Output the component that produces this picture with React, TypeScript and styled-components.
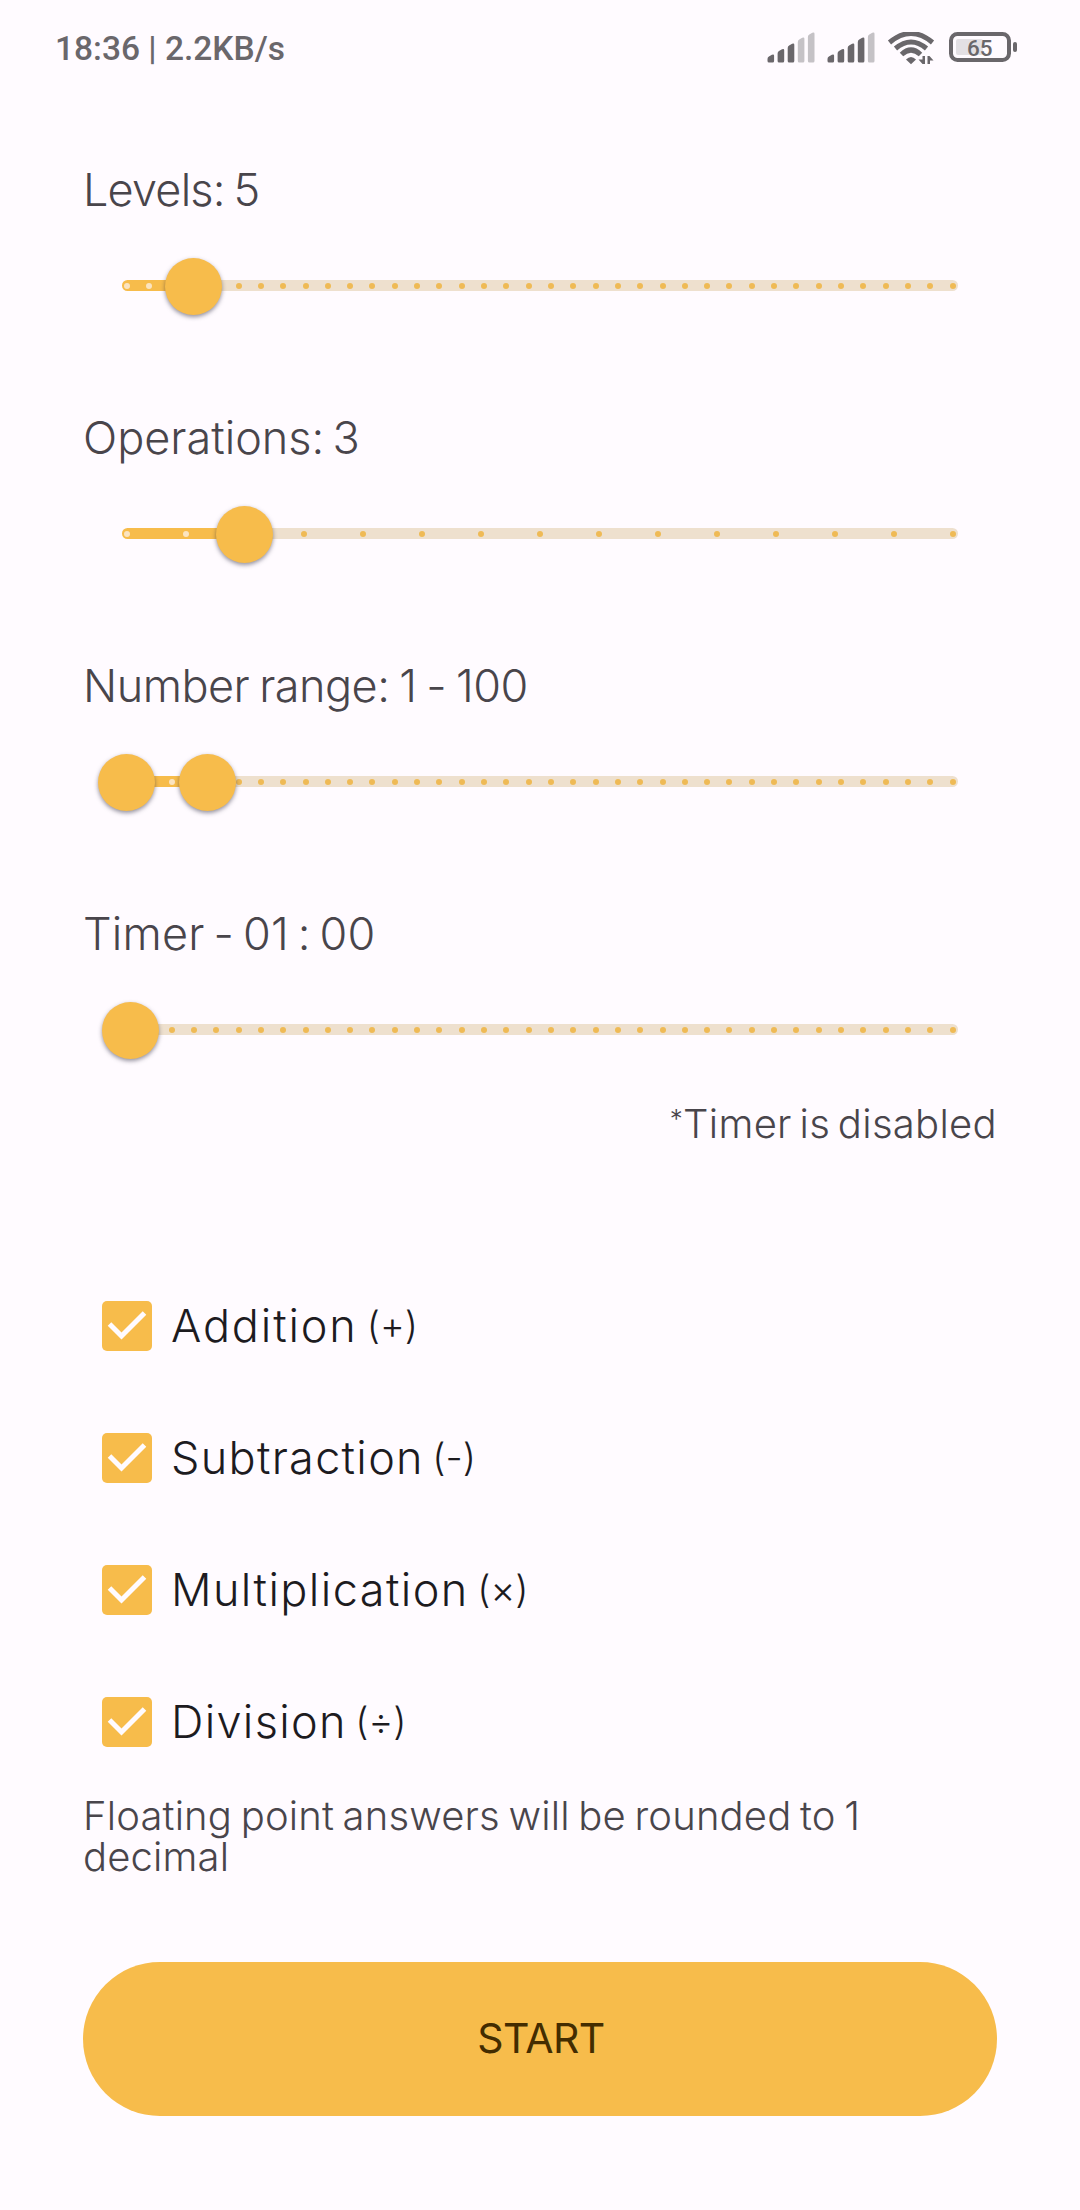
import React from 'react';
import styled, { createGlobalStyle } from 'styled-components';

const AMBER = '#f7bc4b';
const STATUS_GREY = '#6a676b';

const GlobalStyle = createGlobalStyle`
  *, *::before, *::after { box-sizing: border-box; }
  html, body { margin: 0; background: #fffbff; }
  body { font-family: Inter, "Liberation Sans", sans-serif; font-weight: 300; font-feature-settings: "calt" 0; }
`;

const Screen = styled.div`
  width: 1080px;
  height: 2210px;
  overflow: hidden;
  display: flex;
  flex-direction: column;
  background: #fffbff;
`;

const StatusBar = styled.header`
  height: 96px;
  padding: 0 62px 0 55px;
  display: flex;
  justify-content: space-between;
  align-items: center;
  color: ${STATUS_GREY};
`;

const Clock = styled.span`
  margin-top: 2px;
  font: 500 33.5px/40px Roboto, sans-serif;
  white-space: pre;
`;

const StatusIcons = styled.svg`
  display: block;
  width: 252px;
  height: 36px;
  margin-top: 4px;
`;

const BatteryText = styled.text`
  font: 500 22.5px Roboto, sans-serif;
  fill: ${STATUS_GREY};
`;

const Content = styled.main`
  padding: 66px 83px 0;
  display: flex;
  flex-direction: column;
`;

const Settings = styled.section`
  display: flex;
  flex-direction: column;
  gap: 94px;
`;

const Setting = styled.div`
  display: flex;
  flex-direction: column;
  gap: 38px;
`;

const Text = styled.span<{ $ls?: number; $ws?: number }>`
  font-size: 45px;
  line-height: 56px;
  color: #49454b;
  white-space: nowrap;
  letter-spacing: ${(p) => p.$ls ?? 0}px;
  word-spacing: ${(p) => p.$ws ?? 0}px;
`;

const Slider = styled.div`
  position: relative;
  height: 60px;
  margin: 0 39px;
  padding-bottom: 1px;
  display: flex;
  align-items: center;
`;

const Track = styled.div<{ $from: number; $to: number }>`
  width: 100%;
  height: 11px;
  padding: 0 2px;
  border-radius: 5.5px;
  display: flex;
  align-items: center;
  justify-content: space-between;
  background: linear-gradient(${AMBER}, ${AMBER}) ${(p) => p.$from}px 0 / ${(p) => p.$to - p.$from}px 100% no-repeat #eee0ce;
`;

const Tick = styled.i<{ $active: boolean }>`
  width: 6px;
  height: 6px;
  border-radius: 50%;
  background: ${(p) => (p.$active ? '#fbe4c0' : '#efba56')};
`;

const Thumb = styled.div<{ $at: number }>`
  position: absolute;
  left: ${(p) => p.$at - 28.5}px;
  top: 2px;
  width: 57px;
  height: 57px;
  border-radius: 50%;
  background: ${AMBER};
  box-shadow: 0 2px 4px rgba(40, 40, 60, 0.5);
`;

const Note = styled(Text)`
  font-size: 40px;
  line-height: 48px;
  margin-top: 40px;
  align-self: flex-end;
`;

const Asterisk = styled.span`
  font-size: 26px;
  line-height: 0;
  vertical-align: 10px;
`;

const Checks = styled.section`
  margin-top: 112px;
  display: flex;
  flex-direction: column;
`;

const CheckRow = styled.label`
  height: 132px;
  padding-left: 19px;
  display: flex;
  align-items: center;
  gap: 19px;
`;

const Box = styled.span`
  width: 50px;
  height: 50px;
  border-radius: 5px;
  background: ${AMBER};
`;

const CheckText = styled(Text)`
  color: #1d1b1f;
`;

const Sign = styled.span`
  font-size: 38px;
  line-height: 0;
  letter-spacing: 0;
  vertical-align: 3px;
`;

const Hint = styled(Text)`
  font-size: 40px;
  line-height: 41px;
  margin-top: 7px;
  white-space: pre-line;
`;

const StartButton = styled.button`
  margin-top: 85px;
  height: 154px;
  padding: 0 0 2px 2px;
  border: 0;
  border-radius: 77px;
  background: ${AMBER};
  color: #432c00;
  font: 400 41px/50px Inter, sans-serif;
  letter-spacing: -0.6px;
`;

type SliderData = { label: string; ls: number; ws: number; ticks: number; from: number; to: number; thumbs: number[] };

const sliders: SliderData[] = [
  { label: 'Levels: 5', ls: -0.8, ws: -3.1, ticks: 38, from: 0, to: 71.5, thumbs: [71.5] },
  { label: 'Operations: 3', ls: 0, ws: -4.4, ticks: 15, from: 0, to: 122.5, thumbs: [122.5] },
  { label: 'Number range: 1 - 100', ls: -0.5, ws: -2.3, ticks: 38, from: 4.5, to: 85.5, thumbs: [4.5, 85.5] },
  { label: 'Timer - 01 : 00', ls: 0.2, ws: -4, ticks: 38, from: 0, to: 8.5, thumbs: [8.5] },
];

const operations = [
  { label: 'Addition', sign: '+', ls: 1.85 },
  { label: 'Subtraction', sign: '-', ls: 1.3 },
  { label: 'Multiplication', sign: '×', ls: 1.42 },
  { label: 'Division', sign: '÷', ls: 1.31 },
];

const TRACK_WIDTH = 836;

function RangeSlider({ ticks, from, to, thumbs }: SliderData) {
  return (
    <Slider>
      <Track $from={from} $to={to}>
        {Array.from({ length: ticks }, (_, i) => {
          const x = 5 + (i * (TRACK_WIDTH - 10)) / (ticks - 1);
          return <Tick key={i} $active={x >= from && x <= to} />;
        })}
      </Track>
      {thumbs.map((t) => (
        <Thumb key={t} $at={t} />
      ))}
    </Slider>
  );
}

const barTops = [22.5, 17, 11.5, 5.5, 0.5];

function Signal({ x, level }: { x: number; level: number }) {
  return (
    <g transform={`translate(${x} 0)`}>
      {barTops.map((top, i) => (
        <path
          key={top}
          d={`M${i * 10.1} ${top + 4.5}q0-1.6 1.4-2.4l3-1.8q2.2-1 2.2 1V29q0 1.5-1.5 1.5h-3.6q-1.5 0-1.5-1.5z`}
          fill={i < level ? STATUS_GREY : '#c5c2c6'}
        />
      ))}
    </g>
  );
}

export default function App() {
  return (
    <Screen>
      <GlobalStyle />
      <StatusBar>
        <Clock>18:36 | 2.2KB/s</Clock>
        <StatusIcons viewBox="766 32 252 36">
          <g transform="translate(767.5 32)">
            <Signal x={0} level={3} />
            <Signal x={60} level={4} />
          </g>
          <g fill="none" stroke={STATUS_GREY} strokeWidth="5">
            <path d="M889.5 42.5Q911 24.5 932.5 42.5" />
            <path d="M895.5 48.5Q911 35.5 926.5 48.5" />
            <path d="M901.5 54.5Q911 45.5 920.5 54.5" />
          </g>
          <path d="M906 59.5q5-5 10 0l-5 4.8z" fill={STATUS_GREY} />
          <path d="M925 56v8h-2.5l-4-4.5h4V56zM927.5 64v-8h2l4 4.5h-3.5V64z" fill={STATUS_GREY} />
          <rect x="956" y="39" width="27" height="16" rx="2" fill="#e3e0e4" />
          <rect x="951" y="34" width="58" height="26" rx="6.5" fill="none" stroke={STATUS_GREY} strokeWidth="4" />
          <rect x="1013" y="42" width="4" height="10" rx="2" fill={STATUS_GREY} />
          <BatteryText x="967" y="55.5">65</BatteryText>
        </StatusIcons>
      </StatusBar>
      <Content>
        <Settings>
          {sliders.map((s) => (
            <Setting key={s.label}>
              <Text $ls={s.ls} $ws={s.ws}>{s.label}</Text>
              <RangeSlider {...s} />
            </Setting>
          ))}
        </Settings>
        <Note $ls={0.3} $ws={-3.8}><Asterisk>*</Asterisk>Timer is disabled</Note>
        <Checks>
          {operations.map((o) => (
            <CheckRow key={o.label}>
              <Box>
                <svg width="50" height="50" viewBox="0 0 50 50">
                  <path d="M7.5 23L19.5 35L42.5 12" fill="none" stroke="#fffbff" strokeWidth="5" />
                </svg>
              </Box>
              <CheckText $ls={o.ls} $ws={-5.5}>
                {o.label} <Sign>({o.sign})</Sign>
              </CheckText>
            </CheckRow>
          ))}
        </Checks>
        <Hint $ls={0.15} $ws={-2.8}>{'Floating point answers will be rounded to 1\ndecimal'}</Hint>
        <StartButton>START</StartButton>
      </Content>
    </Screen>
  );
}
